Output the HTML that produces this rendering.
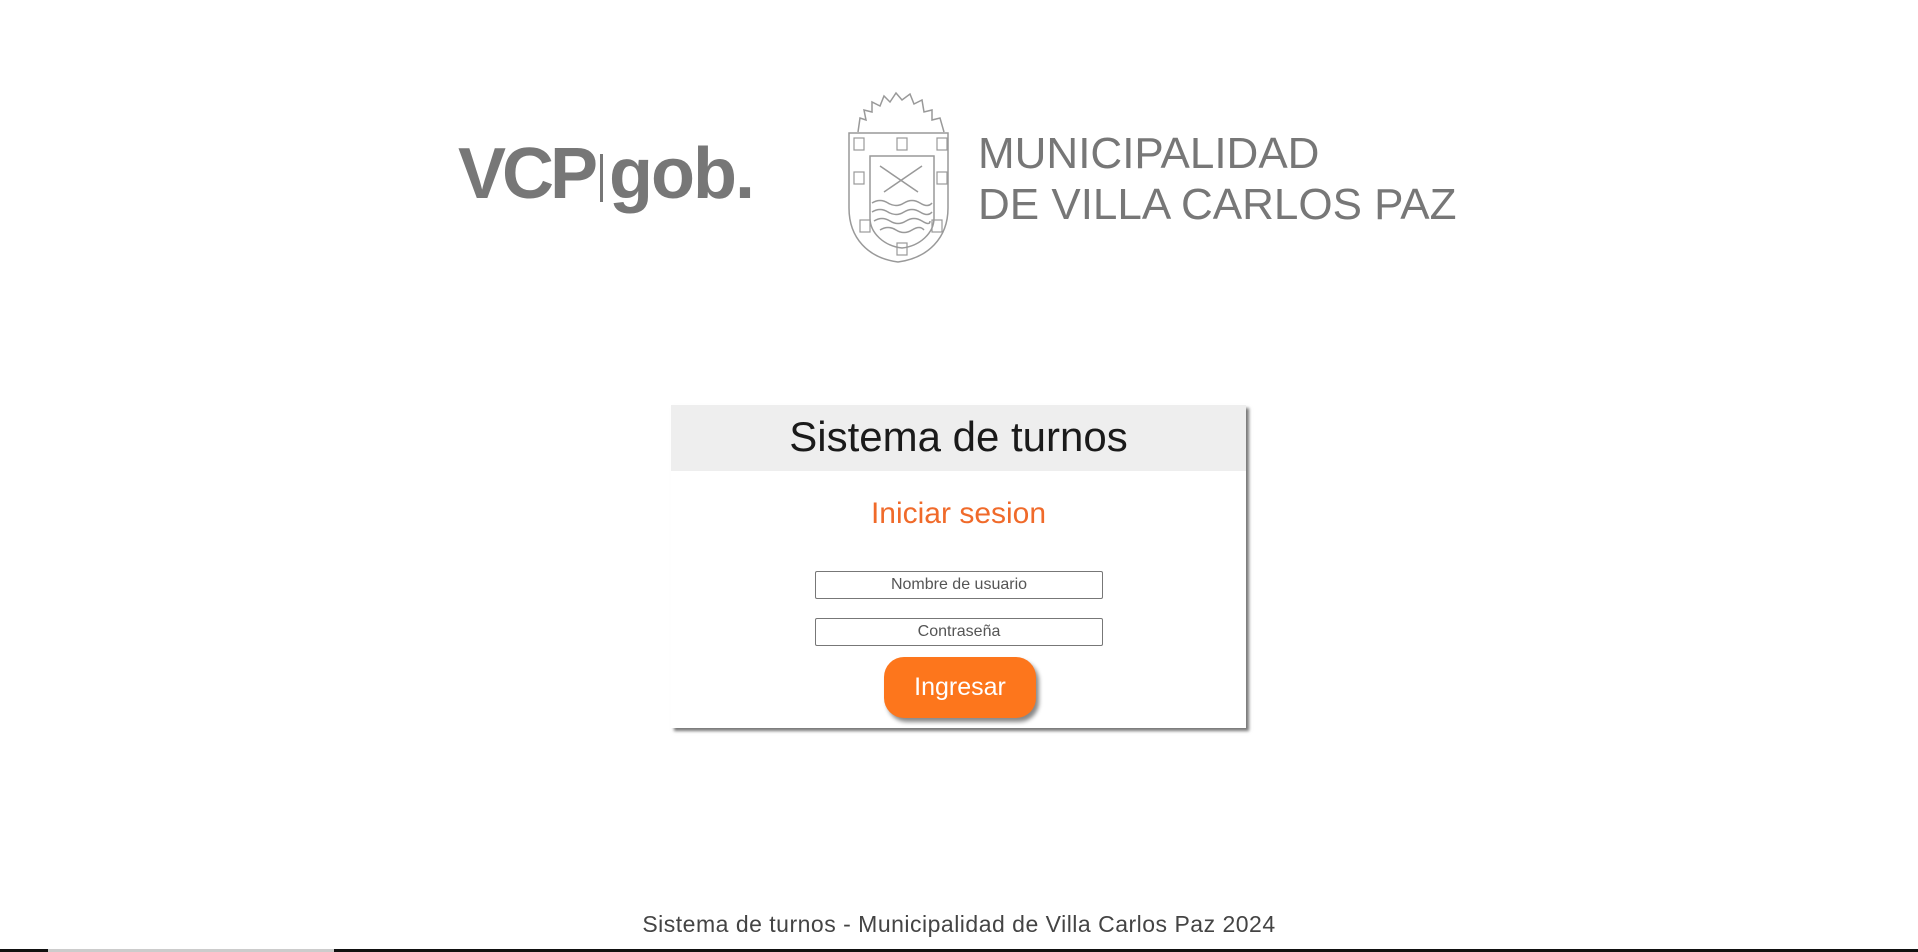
<!DOCTYPE html>
<html><head><meta charset="utf-8"><style>
html,body{margin:0;padding:0;background:#fff;width:1918px;height:952px;overflow:hidden;position:relative;font-family:"Liberation Sans","DejaVu Sans",sans-serif}
.abs{position:absolute}
.card{left:671px;top:405px;width:575px;height:323px;background:#fff;box-shadow:3px 3px 3px #777}
.hdr{left:0;top:0;width:575px;height:66px;background:#eeeeee;text-align:center;font-size:42px;line-height:64px;color:#1a1a1a}
.sub{left:0;width:575px;top:90px;text-align:center;color:#f06a2a;font-size:30px;line-height:38px}
.inp{left:144px;width:286px;height:26px;border:1px solid #777;border-radius:2px;text-align:center;font-size:16px;line-height:26px;color:#555}
.btn{left:213px;top:252px;width:152px;height:61px;background:#fd761c;border-radius:20px;color:#fff;text-align:center;font-size:25px;line-height:60px;box-shadow:3px 4px 4px #888}
</style></head><body>
<div class="abs" style="left:458px;top:134px;font-size:72px;font-weight:bold;color:#777;letter-spacing:-4px;line-height:80px">VCP<span style="display:inline-block;width:3px;height:48px;background:#777;margin:0 6px 0 6px;vertical-align:-4px"></span><span style="letter-spacing:-2px">gob.</span></div>
<svg class="abs" style="left:840px;top:88px" width="120" height="180" viewBox="0 0 120 180" fill="none" stroke="#999" stroke-width="1.5">
<path d="M18 44 L20 30 L26 32 L24 22 L32 24 L32 14 L40 18 L44 8 L50 14 L56 5 L62 12 L70 6 L74 16 L82 12 L84 24 L92 22 L92 32 L100 30 L104 44"/>
<path d="M9 45 H108 V120 C108 150 88 170 58 174 C28 170 9 150 9 120 Z"/>
<path d="M30 68 H94 V130 C94 145 80 158 62 160 C44 158 30 145 30 130 Z"/>
<path d="M40 78 L78 104 M82 78 L44 104"/>
<path d="M32 115 q8 -5 16 0 t16 0 t16 0 t12 0 M32 124 q8 -5 16 0 t16 0 t16 0 t12 0 M34 133 q8 -5 16 0 t16 0 t16 0 t8 0 M40 142 q8 -5 16 0 t16 0 t12 0"/>
<g stroke-width="1.2"><rect x="14" y="50" width="10" height="12"/><rect x="57" y="50" width="10" height="12"/><rect x="97" y="50" width="10" height="12"/><rect x="14" y="84" width="10" height="12"/><rect x="97" y="84" width="10" height="12"/><rect x="20" y="132" width="10" height="12"/><rect x="92" y="132" width="10" height="12"/><rect x="57" y="155" width="10" height="12"/></g>
</svg>
<div class="abs" style="left:978px;top:128px;font-size:44px;color:#777;line-height:51px;white-space:nowrap">MUNICIPALIDAD<br>DE VILLA CARLOS PAZ</div>
<div class="abs card">
<div class="abs hdr">Sistema de turnos</div>
<div class="abs sub">Iniciar sesion</div>
<div class="abs inp" style="top:166px">Nombre de usuario</div>
<div class="abs inp" style="top:213px">Contraseña</div>
<div class="abs btn">Ingresar</div>
</div>
<div class="abs" style="left:0;width:1918px;top:911px;text-align:center;font-size:23px;letter-spacing:0.5px;color:#444">Sistema de turnos - Municipalidad de Villa Carlos Paz 2024</div>
<div class="abs" style="left:0;top:949px;width:1918px;height:3px;background:#111"></div>
<div class="abs" style="left:48px;top:949px;width:286px;height:3px;background:#ccc"></div>
</body></html>
